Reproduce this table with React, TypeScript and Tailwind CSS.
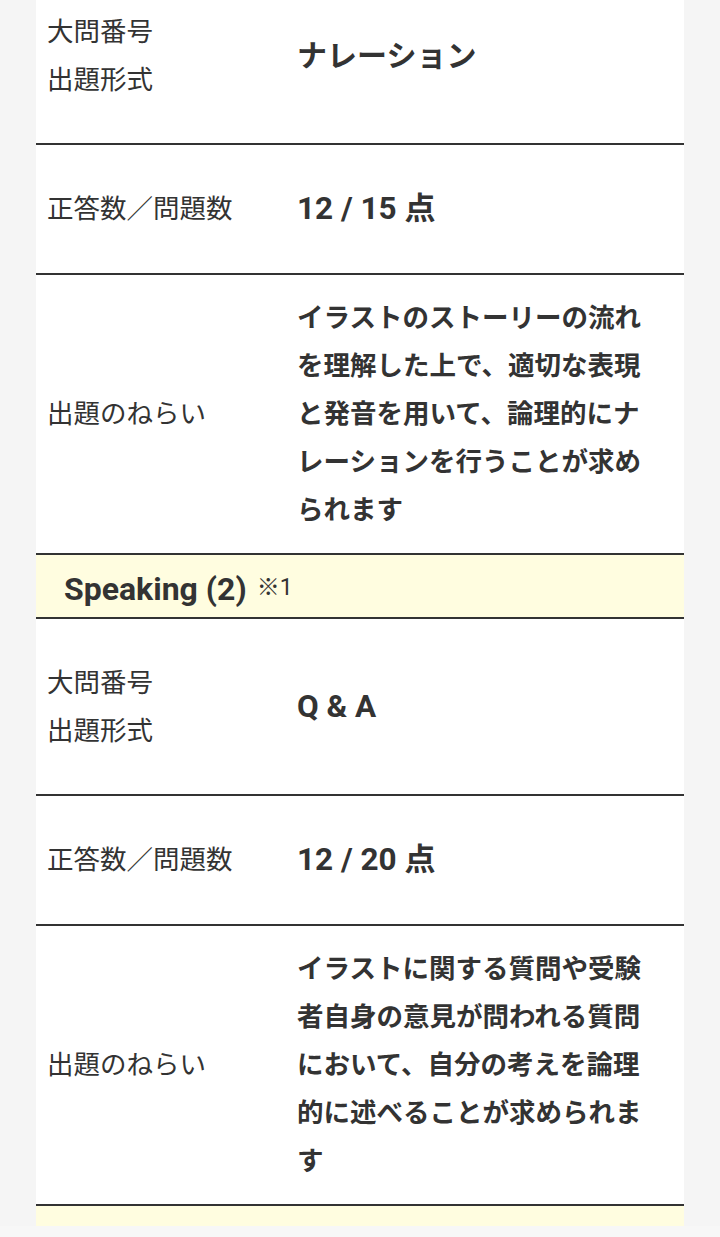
import React from "react";

type RowProps = {
  label: React.ReactNode;
  value: React.ReactNode;
  height: string;
  big?: boolean;
};

function Row({ label, value, height, big }: RowProps) {
  return (
    <div className={`flex items-center border-b-2 border-[#333] ${height}`}>
      <div className="w-[250px] shrink-0 pl-[11px] text-[26.5px] leading-[48px] text-[#333]">
        {label}
      </div>
      <div className="flex-1 pl-[11px]">
        <div
          className={
            big
              ? "w-[352px] text-[30px] font-bold leading-[48px] text-[#333]"
              : "w-[352px] text-[26.5px] font-bold leading-[48px] text-[#333]"
          }
        >
          {value}
        </div>
      </div>
    </div>
  );
}

function SectionHeader({ title }: { title: string }) {
  return (
    <div className="flex h-[64px] items-center border-b-2 border-[#333] bg-[#fffde0] pl-[28px] text-[#333]">
      <div className="mt-[5px] flex items-baseline">
        <span className="text-[32px] font-bold">{title}</span>
        <span className="ml-[10px] relative -top-[5px] text-[23px] leading-none">
          ※1
        </span>
      </div>
    </div>
  );
}

const label2 = (
  <>
    大問番号
    <br />
    出題形式
  </>
);

export default function App() {
  return (
    <div
      className="h-[1237px] bg-[#f5f5f5]"
      style={{
        fontFamily: 'Roboto, "Noto Sans CJK JP", "Noto Sans", sans-serif',
      }}
    >
      <div className="h-[1226px] overflow-hidden">
        <div className="mx-[36px] -mt-[32px] bg-white">
          <Row height="h-[177px]" label={label2} value="ナレーション" big />
          <Row
            height="h-[130px]"
            label="正答数／問題数"
            value={
              <span className="text-[31.5px]">
                12 / 15 <span className="text-[31px]">点</span>
              </span>
            }
            big
          />
          <Row
            height="h-[280px]"
            label="出題のねらい"
            value="イラストのストーリーの流れを理解した上で、適切な表現と発音を用いて、論理的にナレーションを行うことが求められます"
          />
          <SectionHeader title="Speaking (2)" />
          <Row
            height="h-[177px]"
            label={label2}
            value={<span className="text-[31.5px]">Q &amp; A</span>}
            big
          />
          <Row
            height="h-[130px]"
            label="正答数／問題数"
            value={
              <span className="text-[31.5px]">
                12 / 20 <span className="text-[31px]">点</span>
              </span>
            }
            big
          />
          <Row
            height="h-[280px]"
            label="出題のねらい"
            value="イラストに関する質問や受験者自身の意見が問われる質問において、自分の考えを論理的に述べることが求められます"
          />
          <SectionHeader title="Speaking (3)" />
        </div>
      </div>
      <div className="h-[11px] bg-[#f7f7f7]" />
    </div>
  );
}
